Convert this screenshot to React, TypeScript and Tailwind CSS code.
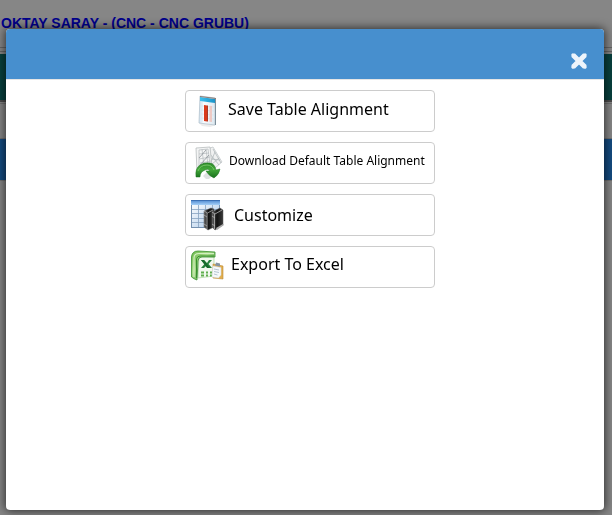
import type { ReactNode } from "react";

function SaveIcon() {
  return (
    <svg viewBox="0 0 34 36" className="h-9 w-[34px] shrink-0" aria-hidden="true">
      <defs>
        <linearGradient id="saveTop" x1="0" x2="1">
          <stop offset="0" stopColor="#3cc0ee" />
          <stop offset="1" stopColor="#1b93c8" />
        </linearGradient>
        <linearGradient id="saveSheet" x1="0" x2="1">
          <stop offset="0" stopColor="#cfe2f0" />
          <stop offset=".3" stopColor="#fafcfe" />
          <stop offset="1" stopColor="#dde8f0" />
        </linearGradient>
      </defs>
      <path d="M9 30L26 32L20 34L12 33Z" fill="#ececec" />
      <path d="M10 3L25 5V32L9 30Z" fill="url(#saveSheet)" stroke="#b4c3ce" strokeWidth=".8" />
      <path d="M25 5L26 5V32L25 32Z" fill="#7d8f9b" />
      <path d="M10 4L25 6V10L10 8Z" fill="url(#saveTop)" />
      <path d="M10 3.5L26 5.5" stroke="#8a7d78" />
      <path d="M11 13L24 14M11 17L24 18M11 21L24 22M11 25L24 26M12 9V29" stroke="#cfdde8" strokeWidth=".5" />
      <path d="M14 12L17 12.4V28.4L14 28Z" fill="#d93a1c" />
      <path d="M17 12.4L18 12.6V28.6L17 28.4Z" fill="#a63a2a" />
      <path d="M19.5 12.8L22 13V29L19.5 28.8Z" fill="#edc9c4" />
    </svg>
  );
}

function DownloadIcon() {
  return (
    <svg viewBox="0 0 34 36" className="h-9 w-[34px] shrink-0" aria-hidden="true">
      <defs>
        <linearGradient id="greenArrow" x1="0" y1="0" x2="0" y2="1">
          <stop offset="0" stopColor="#2f8a2b" />
          <stop offset=".45" stopColor="#43a83a" />
          <stop offset="1" stopColor="#176f1c" />
        </linearGradient>
      </defs>
      <path d="M20 3L23 2L32 17L25 23L18 20Z" fill="#f0f1f1" stroke="#c3c8ca" strokeWidth=".8" />
      <path d="M20 9L29 20M25 7L20 19M29 13L21 20M21 14L30 15M23 4L31 18" stroke="#a9b1b5" strokeWidth=".7" />
      <path d="M6 3L20 2L22 22L7 27Z" fill="#f4f5f5" stroke="#b8bcbe" strokeWidth=".8" />
      <path d="M9 5L18 4L20 19L9 23ZM9 9L19 8M9 14L20 12M10 18L21 16M12 4L14 22M16 4L18 20" fill="none" stroke="#b4babd" strokeWidth=".7" />
      <path d="M9 13L16 5M10 20L19 10" stroke="#7f878c" strokeWidth=".7" />
      <path d="M17 27L22 31L19 34H16L13 31Z" fill="#dfe2e2" />
      <path d="M6 32Q5 23 10 20Q14 17 20 18Q25 19 26 25L30 24Q29 30 24 33Q19 31 16 26L20 26Q18 23 15 25Q10 27 10 32Z" fill="url(#greenArrow)" stroke="#1e7522" strokeWidth=".5" />
      <path d="M8 26Q10 20 17 20Q22 20 24 25" fill="none" stroke="#74c765" />
    </svg>
  );
}

function CustomizeIcon() {
  return (
    <svg viewBox="0 0 34 36" className="h-9 w-[34px] shrink-0" aria-hidden="true">
      <defs>
        <linearGradient id="tableTop" x1="0" y1="0" x2="0" y2="1">
          <stop offset="0" stopColor="#4a86cf" />
          <stop offset="1" stopColor="#a5d0f8" />
        </linearGradient>
        <linearGradient id="tableBody" x1="0" y1="0" x2="1" y2="1">
          <stop offset="0" stopColor="#fff" />
          <stop offset="1" stopColor="#a9c8e9" />
        </linearGradient>
        <linearGradient id="book" x1="0" x2="1">
          <stop offset="0" stopColor="#666" />
          <stop offset=".45" stopColor="#111" />
          <stop offset="1" stopColor="#3a3a3a" />
        </linearGradient>
      </defs>
      <rect x="1.5" y="3.5" width="28" height="27" fill="url(#tableBody)" stroke="#7591b0" />
      <path d="M1 3H30V8H1Z" fill="url(#tableTop)" />
      <path d="M1 3.5H30" stroke="#3b70b4" />
      <path d="M2 12.5H29M2 16.5H29M2 21.5H29M2 25.5H29M8.5 8V30M15.5 8V30M22.5 8V30" stroke="#86a2c0" strokeWidth=".8" />
      <path d="M14 14L21 11L24 12V30L18 33L14 30Z" fill="url(#book)" stroke="#666" strokeWidth=".5" />
      <path d="M14 14L17.5 16L23 13M17 16V32M14 18L17 20M14 27L17 29" fill="none" stroke="#aaa" strokeWidth=".8" />
      <path d="M22 15L30 11L33 13V28L25 33L22 30Z" fill="url(#book)" stroke="#555" strokeWidth=".5" />
      <path d="M22 15L25 17L32 13M24.5 17V32M22 19L25 21M22 27L25 29" fill="none" stroke="#b5b5b5" strokeWidth=".8" />
      <path d="M26 31L33 27L34 28L27 33Z" fill="#aaa" />
    </svg>
  );
}

function ExcelIcon() {
  return (
    <svg viewBox="0 0 34 36" className="h-9 w-[34px] shrink-0" aria-hidden="true">
      <defs>
        <linearGradient id="excelGreen" x1="0" y1="0" x2="1" y2="1">
          <stop offset="0" stopColor="#6fbb4c" />
          <stop offset=".4" stopColor="#a5d987" />
          <stop offset="1" stopColor="#2c8a28" />
        </linearGradient>
      </defs>
      <path d="M9 7L24 8V27L8 29Z" fill="#f1f8ee" stroke="#a9d29c" strokeWidth=".7" />
      <path d="M1.5 28V8Q2 2 8 2L25 3V8H12Q8 8 8 12L7 31Q4 30 1.5 28Z" fill="url(#excelGreen)" stroke="#37902d" strokeWidth=".8" />
      <path d="M4 28V9Q4 4.5 9 4.5H24" fill="none" stroke="#d2efc2" strokeWidth="1.2" />
      <path d="M6.5 29V11Q6.5 7 11 7H24" fill="none" stroke="#378f2f" />
      <path d="M11 11H14L17 14L19 11H22L18.5 15L22 19H18L16 17L14 19H11L14.5 15Z" fill="#24803a" />
      <path d="M11 11H14L20 19H17Z" fill="#176a2b" />
      <path d="M11 23.5H14M16 23.5H18M20 23.5H22M11 26.5H14M16 26.5H18M20 26.5H22" stroke="#5eae4d" strokeWidth="1.8" />
      <path d="M23 15L33 17V30L23 29Z" fill="#e2ae4d" stroke="#bd8935" strokeWidth=".6" />
      <path d="M23 17L31 18.5V26L28.5 29L22 28Z" fill="#f6f9fb" stroke="#ccd6df" strokeWidth=".5" />
      <path d="M24 20L29 21M24 22.5L29 23.5M24 25L27.5 26" stroke="#a5b7c9" strokeWidth=".8" />
      <path d="M26 13.5L30 14.5V17.5L25 16.5Z" fill="#8594a2" />
    </svg>
  );
}

function Action({ icon, className, children }: { icon: ReactNode; className: string; children: ReactNode }) {
  return (
    <button
      type="button"
      className="flex h-[42px] w-full cursor-pointer items-start rounded border border-[#cccccc] bg-white px-1 pt-[2px] text-left text-black hover:bg-gray-50"
    >
      {icon}
      <span className={className}>{children}</span>
    </button>
  );
}

export default function App() {
  return (
    <div className="min-h-screen overflow-hidden bg-[#868686] font-['Liberation_Sans',Arial,sans-serif]">
      <header className="h-12 border-b border-[#656565] pt-[15px] pl-px">
        <h1 className="text-sm leading-4 font-bold whitespace-nowrap text-[#00008b]">OKTAY SARAY - (CNC - CNC GRUBU)</h1>
      </header>
      <div className="mt-[3px] h-[3px] border-t border-[#656565]" />
      <div className="h-12 border-b-2 border-[#4b4b4b] bg-[#08403e]" />
      <div className="mt-px h-9 border-y border-[#707070]" />
      <div className="h-[41px] bg-[#154b80]" />
      <div className="border-t border-[#707070]" />

      <div className="fixed inset-0 flex pt-[29px] pr-2 pb-[5px] pl-[6px]">
        <section
          role="dialog"
          aria-modal="true"
          aria-label="Table options"
          className="flex min-w-0 flex-1 flex-col overflow-hidden rounded bg-white shadow-[0_0_10px_1px_rgba(0,0,0,0.65)]"
        >
          <div className="flex h-[51px] shrink-0 items-center justify-end border-b border-[#e5e5e5] bg-[#478fce] pt-[14px] pr-[15px]">
            <button type="button" aria-label="Close" className="cursor-pointer text-[#edf4fb]">
              <svg viewBox="0 0 20 20" className="size-5" aria-hidden="true">
                <path d="M4 4L16 16M16 4L4 16" fill="none" stroke="currentColor" strokeWidth="5" />
                <path d="M4 4L16 16M16 4L4 16" fill="none" stroke="currentColor" strokeWidth="3.5" strokeLinecap="round" />
              </svg>
            </button>
          </div>
          <main className="flex-1 overflow-auto pt-[10px] pl-[10px] font-['Noto_Sans',Tahoma,sans-serif]">
            <div className="mx-auto flex w-full max-w-[250px] flex-col gap-[10px]">
              <Action icon={<SaveIcon />} className="pt-1 pl-1 text-base leading-6 whitespace-nowrap">Save Table Alignment</Action>
              <Action icon={<DownloadIcon />} className="pt-1 pl-[5px] text-xs leading-6 whitespace-nowrap">Download Default Table Alignment</Action>
              <Action icon={<CustomizeIcon />} className="pt-[6px] pl-[10px] text-base leading-6 whitespace-nowrap">Customize</Action>
              <Action icon={<ExcelIcon />} className="pt-[3px] pl-[7px] text-base leading-6 whitespace-nowrap">Export To Excel</Action>
            </div>
          </main>
        </section>
      </div>
    </div>
  );
}
